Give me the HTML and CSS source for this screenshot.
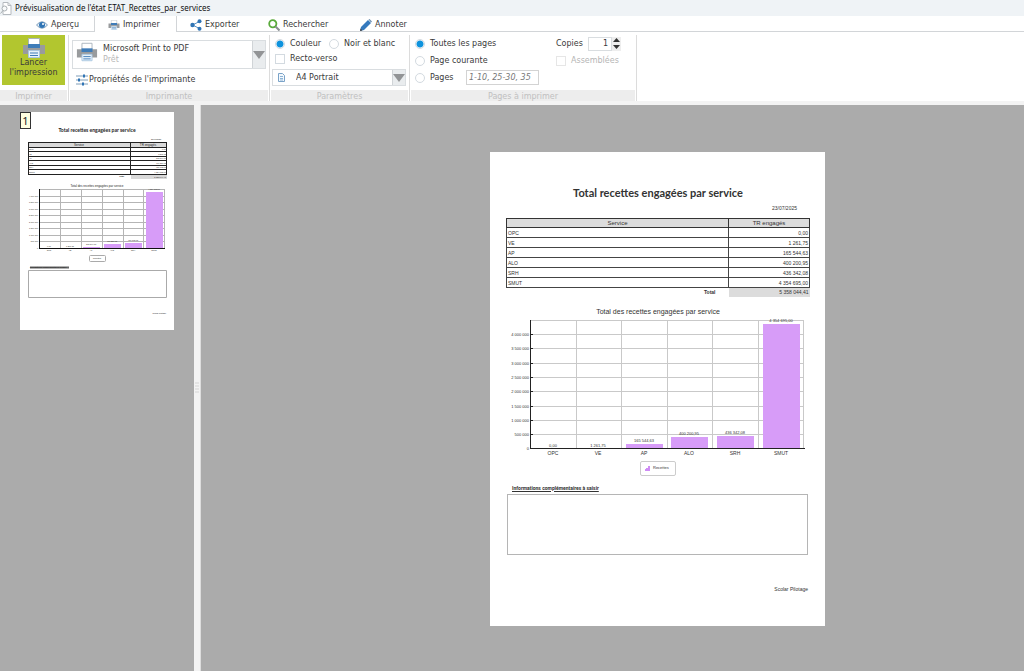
FILE: index.html
```html
<!DOCTYPE html>
<html lang="fr">
<head>
<meta charset="utf-8">
<title>Prévisualisation de l'état ETAT_Recettes_par_services</title>
<link rel="stylesheet" href="styles.css">
</head>
<body>
<svg class="defs" aria-hidden="true">
  <symbol id="printer" viewBox="0 0 24 20">
    <path d="M6.500.5h11v7h-11z" fill="#fff" stroke="#aab4bc" stroke-width="1"/>
    <path d="M1 7h22v9H1z" fill="#999b9d"/>
    <path d="M6 6h12v4H6z" fill="#3f7cb8"/>
    <path d="M6.500 12.500h11v7h-11z" fill="#e8f2fa" stroke="#a9c6e0" stroke-width="1"/>
    <path d="M8 15h8M8 17.500h8" stroke="#3f7cb8" stroke-width="1"/>
  </symbol>
</svg>
<div class="app">
  <header class="titlebar">
    <svg class="title-icon" viewBox="0 0 12 13"><path d="M3 .5h5l3 3v9H3z" fill="#fff" stroke="#b5babf"/><path d="M8 .5v3h3" fill="none" stroke="#b5babf"/><circle cx="4.500" cy="6.500" r="2.500" fill="#f8fafb" stroke="#aab0b4"/><path d="M3 8.500L.5 11.500" stroke="#aab0b4"/></svg>
    <h1>Prévisualisation de l'état ETAT_Recettes_par_services</h1>
  </header>
  <nav class="tabs">
    <button class="tab tab-view"><svg width="12" height="10" viewBox="0 0 12 10"><path d="M.5 5Q6-1.500 11.500 5Q6 11.500.5 5z" fill="#e4eff8" stroke="#7e9dba"/><circle cx="6" cy="5" r="3" fill="#2f74b5"/><circle cx="7" cy="4" r="1" fill="#fff"/></svg>Aperçu</button>
    <button class="tab tab-active"><svg width="12" height="10"><use href="#printer"/></svg>Imprimer</button>
    <button class="tab tab-export"><svg width="12" height="12" viewBox="0 0 12 12"><path d="M9.500 2.500L2.500 6l7 3.500" fill="none" stroke="#5a94c8"/><circle cx="2.500" cy="6" r="2.200" fill="#2f74b5"/><circle cx="9.500" cy="2.200" r="2" fill="#2f74b5"/><circle cx="9.500" cy="9.800" r="2" fill="#2f74b5"/></svg>Exporter</button>
    <button class="tab tab-search"><svg width="12" height="12" viewBox="0 0 12 12"><circle cx="4.800" cy="4.800" r="3.600" fill="#fff" stroke="#5aaa3c" stroke-width="1.800"/><path d="M7.500 7.500l4 4" stroke="#8b8f92" stroke-width="2"/></svg>Rechercher</button>
    <button class="tab tab-note"><svg width="12" height="12" viewBox="0 0 12 12"><path d="M0 12l1-4 7-7 3 3-7 7z" fill="#3579bd"/><path d="M8.500.5l1-.5L12 2.500l-1 1z" fill="#6b8fb0"/><path d="M0 12l.6-2.400 1.800 1.800z" fill="#444"/></svg>Annoter</button>
  </nav>
  <div class="ribbon">
    <section class="group g-launch">
      <div class="group-body"><button class="launch"><svg width="26" height="20"><use href="#printer"/></svg><span>Lancer<br>l'impression</span></button></div>
      <h2>Imprimer</h2>
    </section>
    <section class="group g-printer">
      <div class="group-body">
        <button class="printer-pick">
          <svg class="printer-icon" width="22" height="20"><use href="#printer"/></svg>
          <span class="printer-name">Microsoft Print to PDF<small>Prêt</small></span>
          <span class="drop"><svg width="12" height="8" viewBox="0 0 12 8"><path d="M0 0h12L6 8z" fill="#929496"/></svg></span>
        </button>
        <button class="props"><svg width="12" height="12" viewBox="0 0 12 12"><path d="M0 2h12M0 6h12M0 10h12" stroke="#7f9db8"/><path d="M7 .5h2v3H7zM2 4.500h2v3H2zM6 8.500h2v3H6z" fill="#2f74b5"/></svg>Propriétés de l'imprimante</button>
      </div>
      <h2>Imprimante</h2>
    </section>
    <section class="group g-params">
      <div class="group-body">
        <div class="row"><label class="opt opt-color"><input type="radio" name="color" checked>Couleur</label><label class="opt"><input type="radio" name="color">Noir et blanc</label></div>
        <div class="row"><label class="opt"><input type="checkbox">Recto-verso</label></div>
        <div class="paper">
          <svg class="paper-icon" width="7" height="9" viewBox="0 0 7 9"><path d="M.5.5h4l2 2v6h-6z" fill="#f4f9fd" stroke="#7aa3c8"/><path d="M2 3.500h3M2 5.500h3M2 7h3" stroke="#8fb4d6"/></svg>
          <select aria-label="Format du papier"><option>A4 Portrait</option></select>
          <span class="drop"><svg width="12" height="8" viewBox="0 0 12 8"><path d="M0 0h12L6 8z" fill="#929496"/></svg></span>
        </div>
      </div>
      <h2>Paramètres</h2>
    </section>
    <section class="group g-pages">
      <div class="group-body pages-body">
        <div class="pages-left">
          <label class="opt"><input type="radio" name="range" checked>Toutes les pages</label>
          <label class="opt"><input type="radio" name="range">Page courante</label>
          <div class="range"><label class="opt"><input type="radio" name="range">Pages</label><input class="range-text" type="text" placeholder="1-10, 25-30, 35" aria-label="Pages à imprimer"></div>
        </div>
        <div class="pages-right">
          <div class="copies"><label for="copies">Copies</label><input id="copies" type="text" value="1"><span class="spin"><button aria-label="Plus"><svg width="7" height="4" viewBox="0 0 7 4"><path d="M0 4h7L3.500 0z" fill="#333"/></svg></button><button aria-label="Moins"><svg width="7" height="4" viewBox="0 0 7 4"><path d="M0 0h7L3.500 4z" fill="#333"/></svg></button></span></div>
          <label class="opt disabled"><input type="checkbox" disabled>Assemblées</label>
        </div>
      </div>
      <h2>Pages à imprimer</h2>
    </section>
  </div>
  <main class="workspace">
    <aside class="thumbs">
      <a class="thumb" href="#page1" aria-label="Page 1">
        <svg class="thumb-page" viewBox="0 0 154 218">
          <text class="thumb-title" x="77" y="20" font-size="5" text-anchor="middle" font-weight="bold">Total recettes engagées par service</text>
          <text x="141" y="28" font-size="2" text-anchor="end">23/07/2025</text>
          <path d="M8 30.500h139v5H8z" fill="#d9d9d9"/>
          <path d="M130 63h17v4h-17z" fill="#d9d9d9"/>
          <path d="M8 30.500h139M8 35.500h139M8 39.500h139M8 44.500h139M8 48.500h139M8 53.500h139M8 57.500h139M8 62.500h139M8.500 30v33M110.500 30v33M146.500 30v33" stroke="#222" fill="none"/>
          <path d="M111 63h36v4h-36z" fill="#d9d9d9"/>
          <g font-size="3"><text x="59" y="34" text-anchor="middle">Service</text><text x="128" y="34" text-anchor="middle">TR engagés</text></g>
          <g font-size="2"><text x="9" y="38">OPC</text><text x="9" y="43">VE</text><text x="9" y="47">AP</text><text x="9" y="52">ALO</text><text x="9" y="56">SRH</text><text x="9" y="61">SMUT</text></g>
          <g font-size="2" text-anchor="end"><text x="146" y="38">0,00</text><text x="146" y="43">1 261,75</text><text x="146" y="47">165 544,63</text><text x="146" y="52">400 200,95</text><text x="146" y="56">436 342,08</text><text x="146" y="61">4 354 695,00</text><text x="146" y="66">5 358 044,41</text><text x="104" y="65" font-weight="bold">Total</text></g>
          <text x="77" y="75" font-size="3" text-anchor="middle">Total des recettes engagées par service</text>
          <path d="M20 77.500h125M20 84.500h125M20 90.500h125M20 97.500h125M20 103.500h125M20 110.500h125M20 116.500h125M20 123.500h125M20 129.500h125M40.500 78v58M61.500 78v58M82.500 78v58M103.500 78v58M123.500 78v58M144.500 78v58" stroke="#b5b5b5" fill="none"/>
          <path d="M63 135h17v1H63zM84 132h17v4H84zM105 131h17v5h-17zM126 80h17v56h-17z" fill="#d79cf8"/>
          <path d="M19.500 77v59M19 136.500h126" stroke="#111"/>
          <g font-size="2" text-anchor="end"><text x="18" y="85">4 000 000</text><text x="18" y="91">3 500 000</text><text x="18" y="98">3 000 000</text><text x="18" y="104">2 500 000</text><text x="18" y="111">2 000 000</text><text x="18" y="117">1 500 000</text><text x="18" y="124">1 000 000</text><text x="18" y="130">500 000</text><text x="18" y="137">0</text></g>
          <g font-size="2" text-anchor="middle"><text x="29" y="135">0,00</text><text x="50" y="135">1 261,75</text><text x="71" y="133">165 544,63</text><text x="92" y="130">400 200,95</text><text x="113" y="129">436 342,08</text><text x="134" y="78">4 354 695,00</text><text x="29" y="139">OPC</text><text x="50" y="139">VE</text><text x="71" y="139">AP</text><text x="92" y="139">ALO</text><text x="113" y="139">SRH</text><text x="134" y="139">SMUT</text></g>
          <rect x="69.500" y="143.500" width="16" height="6" rx="1" fill="#fff" stroke="#aaa"/><text x="73" y="147" font-size="2">Recettes</text>
          <text x="10" y="156" font-size="2" font-weight="bold">Informations complémentaires à saisir</text><path d="M10 155.500h39" stroke="#333" stroke-width="2" opacity=".75"/>
          <path d="M8.500 158.500h138v27h-138z" fill="none" stroke="#aaa"/>
          <text x="146" y="202" font-size="2" text-anchor="end">Scolar Pilotage</text>
        </svg>
        <span class="badge">1</span>
      </a>
    </aside>
    <div class="splitter"><svg width="6" height="12" viewBox="0 0 6 12"><path d="M1 1h4M1 4h4M1 7h4M1 10h4" stroke="#d5d5d5"/></svg></div>
    <div class="preview">
      <article class="page" id="page1">
        <h3>Total recettes engagées par service</h3>
        <p class="date">23/07/2025</p>
        <table>
          <thead><tr><th>Service</th><th class="amount">TR engagés</th></tr></thead>
          <tbody>
            <tr><td>OPC</td><td>0,00</td></tr>
            <tr><td>VE</td><td>1 261,75</td></tr>
            <tr><td>AP</td><td>165 544,63</td></tr>
            <tr><td>ALO</td><td>400 200,95</td></tr>
            <tr><td>SRH</td><td>436 342,08</td></tr>
            <tr><td>SMUT</td><td>4 354 695,00</td></tr>
          </tbody>
          <tfoot><tr><td>Total</td><td>5 358 044,41</td></tr></tfoot>
        </table>
        <h4>Total des recettes engagées par service</h4>
        <svg class="chart" viewBox="0 0 302 140">
          <path d="M25 2.500h273M25 16.500h273M25 30.500h273M25 45.500h273M25 59.500h273M25 73.500h273M25 88.500h273M25 102.500h273M25 116.500h273M70.500 2v128M115.500 2v128M161.500 2v128M206.500 2v128M252.500 2v128M297.500 2v128" stroke="#c9c9c9" fill="none"/>
          <path d="M120 126h37v4h-37zM165 119h37v11h-37zM211 118h37v12h-37zM257 6h37v124h-37z" fill="#d79cf8"/>
          <path d="M24.500 2v129M24 130.500h275M24 16.500h3M24 30.500h3M24 45.500h3M24 59.500h3M24 73.500h3M24 88.500h3M24 102.500h3M24 116.500h3" stroke="#222" fill="none"/>
          <g text-anchor="end"><text x="23" y="18">4 000 000</text><text x="23" y="32">3 500 000</text><text x="23" y="47">3 000 000</text><text x="23" y="61">2 500 000</text><text x="23" y="75">2 000 000</text><text x="23" y="90">1 500 000</text><text x="23" y="104">1 000 000</text><text x="23" y="118">500 000</text><text x="23" y="132">0</text></g>
          <g text-anchor="middle"><text x="47" y="129">0,00</text><text x="92" y="129">1 261,75</text><text x="138" y="124">165 544,63</text><text x="183" y="117">400 200,95</text><text x="229" y="116">436 342,08</text><text x="275" y="4">4 354 695,00</text></g>
          <g class="cats" text-anchor="middle"><text x="47" y="137">OPC</text><text x="92" y="137">VE</text><text x="138" y="137">AP</text><text x="183" y="137">ALO</text><text x="229" y="137">SRH</text><text x="275" y="137">SMUT</text></g>
        </svg>
        <div class="legend"><svg width="5" height="5" viewBox="0 0 5 5"><path d="M0 3h1v2H0zM1 2h2v3H1zM3 0h2v5H3z" fill="#cf8cf5"/></svg>Recettes</div>
        <p class="info"><label for="info">Informations complémentaires à saisir</label></p>
        <textarea id="info"></textarea>
        <p class="foot">Scolar Pilotage</p>
      </article>
    </div>
  </main>
</div>
</body>
</html>
```
FILE: styles.css
```css
* { box-sizing: border-box; }
body { margin: 0; background: #ababab; color: #3a3a3a; font: 8px/12px "DejaVu Sans", sans-serif; }
h1, h2, h3, h4, p { margin: 0; font-weight: normal; }
button, input, select, textarea { font: inherit; color: inherit; margin: 0; padding: 0; border: 0; background: none; border-radius: 0; }
svg { display: block; flex: none; }
.defs { position: absolute; width: 0; height: 0; }
.app { display: flex; flex-direction: column; min-height: 100vh; }

.titlebar { display: flex; align-items: center; gap: 3px; height: 16px; background: #eff3f6; }
.title-icon { width: 12px; height: 13px; }
.titlebar h1 { font: 8px/16px "Noto Sans", sans-serif; color: #111; }

.tabs { display: flex; height: 16px; background: #fff; border-bottom: 1px solid #d2d5d8; }
.tab { display: flex; align-items: center; gap: 3px; height: 16px; padding-top: 2px; }
.tab-view { width: 95px; padding-left: 36px; border-right: 1px solid #d2d5d8; }
.tab-active { width: 82px; padding-left: 13px; background: #fff; border-right: 1px solid #d2d5d8; }
.tab-export { width: 91px; padding-left: 13px; }
.tab-search { width: 92px; }

.ribbon { display: flex; height: 73px; background: #fff; border-bottom: 4px solid #f3f3f3; padding-top: 3px; }
.group { display: flex; flex-direction: column; padding-right: 1px; border-right: 1px solid #dcdcdc; }
.group-body { flex: 1; }
.group h2 { height: 11px; background: #ededed; color: #c0c0c0; text-align: center; font-size: 8px; line-height: 13px; }
.g-launch { width: 69px; }
.g-printer { width: 201px; padding-left: 1px; }
.g-params { width: 140px; padding-left: 1px; }
.g-pages { width: 227px; padding-left: 1px; }
.launch { display: flex; flex-direction: column; align-items: center; width: 63px; height: 50px; margin-left: 2px; padding-top: 3px; background: #b2c62f; line-height: 10px; }
.printer-pick { display: flex; width: 194px; height: 29px; margin: 5px 0 0 2px; border: 1px solid #d9dde0; text-align: left; }
.printer-icon { margin: 1px 5px 0 3px; }
.printer-name { flex: 1; padding-top: 2px; line-height: 11px; }
.printer-name small { display: block; font-size: 8px; color: #b9b9b9; }
.drop { display: flex; align-items: center; justify-content: center; width: 13px; background: #e9ecee; border-left: 1px solid #d0d4d7; }
.props { display: flex; align-items: center; gap: 1px; margin: 5px 0 0 6px; }
.row { display: flex; height: 15px; padding-left: 4px; }
.g-params .group-body { padding-top: 1px; }
.opt { display: flex; align-items: center; gap: 5px; height: 15px; }
.opt-color { width: 54px; }
.opt input { appearance: none; flex: none; width: 10px; height: 10px; border: 1px solid #d3dae0; background: #fff; }
.opt input[type="radio"] { border-radius: 50%; }
.opt input[type="radio"]:checked { background: radial-gradient(circle, #0f93dd 3px, #fff 4px); }
.paper { display: flex; align-items: center; width: 134px; height: 17px; margin: 3px 0 0 1px; border: 1px solid #d9dde0; }
.paper-icon { margin-left: 5px; }
.paper select { appearance: none; flex: 1; padding-left: 11px; }
.paper .drop { align-self: stretch; }
.pages-body { display: flex; justify-content: space-between; padding: 1px 12px 0 4px; }
.pages-left .opt { height: 17px; }
.pages-left > .opt:first-child { height: 15px; margin-bottom: 1px; }
.range { display: flex; align-items: center; gap: 11px; }
.range .opt { width: 40px; }
.range-text { width: 73px; height: 15px; padding-left: 2px; border: 1px solid #d3d3d3; font-style: italic; }
.range-text::placeholder { color: #777; opacity: 1; }
.pages-right { width: 67px; }
.copies { display: flex; align-items: center; height: 15px; margin-bottom: 2px; }
.copies label { width: 28px; }
.copies input { width: 24px; height: 14px; margin-left: 4px; padding-right: 3px; border: 1px solid #d9dde0; text-align: right; }
.spin { display: flex; flex-direction: column; width: 9px; height: 14px; background: #eee; }
.spin button { display: flex; flex: 1; align-items: center; justify-content: center; }
.disabled { color: #b5b5b5; }
.disabled input { border-color: #e6e6e6; }

.workspace { display: flex; flex: 1; }
.thumbs { width: 194px; padding: 7px 0 0 20px; }
.thumb { display: block; position: relative; width: 154px; color: #222; }
.thumb-page { width: 100%; background: #fff; fill: #222; font-family: "Liberation Sans", sans-serif; }
.thumb-title { font-family: Lato, sans-serif; }
.badge { position: absolute; left: 0; top: 0; width: 11px; height: 17px; border: 1px solid #333; background: #ffffe1; text-align: center; font: 11px/15px "Noto Sans", sans-serif; }
.splitter { display: flex; align-items: center; width: 7px; background: #f3f3f3; border-right: 1px solid #ddd; }
.preview { flex: 1; display: flex; justify-content: center; align-items: flex-start; padding: 47px 0 0 90px; }
.page { display: flex; flex-direction: column; width: 335px; padding: 34px 15px 33px 16px; background: #fff; font: 5px/8px "Liberation Sans", sans-serif; color: #333; }
.page h3 { font: bold 11px/14px Lato, sans-serif; text-align: center; }
.date { padding: 4px 13px 0 0; text-align: right; }
.page table { margin: 6px 0 0; border-collapse: collapse; }
.page th { height: 9px; padding: 0; background: #dcdcdc; border: 1px solid #333; font: 6px/8px "Liberation Sans", sans-serif; }
.amount { width: 81px; }
.page td { height: 10px; padding: 0 1px; border: 1px solid #444; line-height: 8px; }
.page td:last-child { text-align: right; }
.page tfoot td { height: 9px; border: 0; border-top: 1px solid #444; text-align: right; }
.page tfoot td:first-child { padding-right: 13px; font-weight: bold; }
.page tfoot td:last-child { background: #dcdcdc; }
.page h4 { margin: 11px 0 2px; font: 7px/8px "Liberation Sans", sans-serif; text-align: center; }
.chart { width: 302px; height: 140px; fill: #333; font: 4px "Liberation Sans", sans-serif; }
.cats { font-size: 5px; }
.legend { display: flex; align-items: center; align-self: center; gap: 3px; width: 36px; height: 15px; margin-top: 3px; padding-left: 4px; border: 1px solid #ccc; border-radius: 2px; font-size: 4px; }
.info { margin: 8px 0 1px 6px; font: bold 5px/8px Roboto, sans-serif; text-decoration: underline; }
.page textarea { width: 301px; height: 61px; margin: 1px 0 0 1px; border: 1px solid #b5b5b5; resize: none; }
.foot { margin: 30px 2px 0 0; text-align: right; }
```
